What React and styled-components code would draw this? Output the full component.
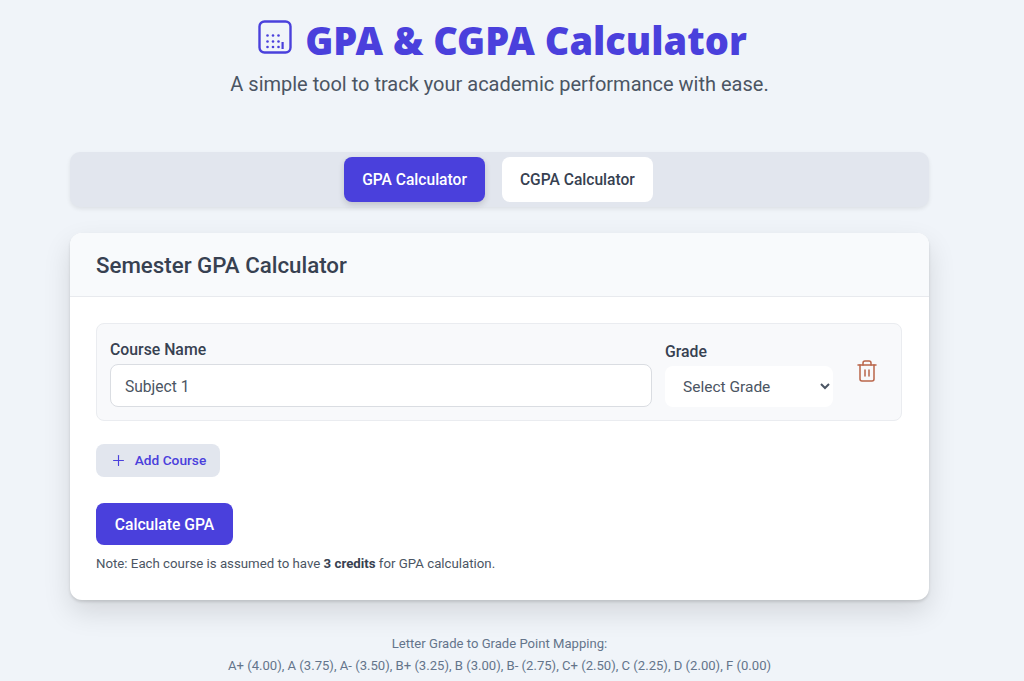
import styled, { createGlobalStyle } from "styled-components";
import { Plus, Trash2 } from "lucide-react";

const GlobalStyle = createGlobalStyle`
  html, body {
    margin: 0;
    padding: 0;
    height: 681px;
    overflow: hidden;
    background: #f0f4f9;
  }
  body {
    font-family: Roboto, "Noto Sans", sans-serif;
    color: #374151;
  }
  * {
    box-sizing: border-box;
  }
`;

const Page = styled.div`
  width: 999px;
  display: flex;
  flex-direction: column;
  align-items: center;
`;

const Header = styled.header`
  height: 152px;
  padding-top: 15px;
  display: flex;
  flex-direction: column;
  align-items: center;
`;

const TitleRow = styled.div`
  display: flex;
  align-items: center;
  gap: 13px;
  height: 50px;
  padding-left: 6px;

  svg {
    margin-bottom: 6px;
  }
`;

const Title = styled.h1`
  margin: 0;
  font-family: "Noto Sans", sans-serif;
  font-size: 38px;
  line-height: 50px;
  font-weight: 900;
  color: #4a40dc;
`;

const Subtitle = styled.p`
  margin: 4px 0 0;
  font-size: 20px;
  line-height: 30px;
  color: #4b5563;
`;

const Tabs = styled.nav`
  width: 859px;
  height: 55px;
  display: flex;
  justify-content: center;
  align-items: flex-start;
  gap: 17px;
  padding: 5px 2px 0 0;
  background: #e2e6ee;
  border-radius: 10px;
  box-shadow: 0 2px 4px rgba(0, 0, 0, 0.08);
`;

const Tab = styled.button`
  height: 45px;
  padding: 0 18px;
  border: none;
  border-radius: 8px;
  font-family: inherit;
  font-size: 15.6px;
  font-weight: 500;
  color: ${(p) => (p.$active ? "#ffffff" : "#374151")};
  background: ${(p) => (p.$active ? "#4a40dc" : "#ffffff")};
  box-shadow: ${(p) => (p.$active ? "0 3px 6px rgba(0, 0, 0, 0.15)" : "none")};
`;

const Card = styled.section`
  width: 859px;
  height: 367px;
  margin-top: 26px;
  background: #ffffff;
  border-radius: 12px;
  box-shadow: 0 12px 28px rgba(0, 0, 0, 0.12), 0 2px 3px rgba(0, 0, 0, 0.12);
`;

const CardHeader = styled.div`
  height: 64px;
  padding: 0 26px;
  display: flex;
  align-items: center;
  background: #f8fafc;
  border-bottom: 1px solid #e8eaee;
  border-radius: 12px 12px 0 0;
`;

const CardTitle = styled.h2`
  margin: 1px 0 0;
  font-size: 22.3px;
  line-height: 28px;
  font-weight: 500;
  color: #374151;
`;

const CardBody = styled.div`
  padding: 26px 26px 0;
`;

const CourseRow = styled.div`
  width: 806px;
  height: 98px;
  display: flex;
  align-items: flex-start;
  padding: 0 13px;
  background: #f8f9fb;
  border: 1px solid #eaecf0;
  border-radius: 8px;
`;

const Field = styled.div`
  display: flex;
  flex-direction: column;
  width: ${(p) => p.$width}px;
  margin-right: ${(p) => p.$gap}px;
  padding-top: ${(p) => p.$top}px;
`;

const Label = styled.label`
  font-size: 15.8px;
  line-height: 20px;
  font-weight: 500;
  color: #374151;
  margin-bottom: ${(p) => p.$gap}px;
`;

const TextInput = styled.input`
  height: 43px;
  width: 100%;
  padding: 2px 14px 0;
  border: 1px solid #dadde2;
  border-radius: 8px;
  background: #ffffff;
  font-family: inherit;
  font-size: 15.6px;
  color: #4b5563;
  outline: none;
`;

const GradeSelect = styled.select`
  height: 41px;
  width: 100%;
  padding: 1px 14px 0;
  border: none;
  border-radius: 8px;
  background: #ffffff;
  font-family: inherit;
  font-size: 15.5px;
  color: #4b5563;
`;

const DeleteButton = styled.button`
  margin: 34px 0 0 22px;
  width: 24px;
  height: 26px;
  padding: 0;
  display: flex;
  align-items: center;
  justify-content: center;
  border: none;
  background: none;
  color: #b9654a;
`;

const AddButton = styled.button`
  margin-top: 23px;
  height: 33px;
  width: 124px;
  display: flex;
  align-items: center;
  justify-content: center;
  gap: 8px;
  padding: 0 0 1px;
  border: none;
  border-radius: 8px;
  background: #e2e6ee;
  color: #4a40dc;
  font-family: inherit;
  font-size: 13.7px;
  font-weight: 500;
`;

const CalculateButton = styled.button`
  display: block;
  margin-top: 26px;
  height: 42px;
  width: 137px;
  border: none;
  border-radius: 8px;
  background: #4a40dc;
  color: #ffffff;
  font-family: inherit;
  font-size: 15.7px;
  font-weight: 500;
`;

const Note = styled.p`
  margin: 10px 0 0;
  font-size: 13.25px;
  line-height: 18px;
  color: #4b5563;

  strong {
    font-weight: 700;
    color: #374151;
  }
`;

const Footer = styled.footer`
  margin-top: 33px;
  text-align: center;
  font-size: 13.1px;
  line-height: 22px;
  color: #64748b;
`;

function CalculatorIcon() {
  return (
    <svg width="34" height="34" viewBox="0 0 34 34" fill="none">
      <rect x="1.5" y="1.5" width="31" height="31" rx="5" stroke="#4a40dc" strokeWidth="2.4" />
      <g fill="#4a40dc">
        <circle cx="9.5" cy="15.5" r="1.3" />
        <circle cx="15" cy="15.5" r="1.3" />
        <circle cx="20.5" cy="15.5" r="1.3" />
        <circle cx="9.5" cy="21.5" r="1.3" />
        <circle cx="15" cy="21.5" r="1.3" />
        <circle cx="20.5" cy="21.5" r="1.3" />
        <circle cx="9.5" cy="27" r="1.3" />
        <circle cx="15" cy="27" r="1.3" />
        <circle cx="20.5" cy="27" r="1.3" />
        <rect x="23.5" y="22" width="2.2" height="7" />
      </g>
    </svg>
  );
}

export default function App() {
  return (
    <>
      <GlobalStyle />
      <Page>
        <Header>
          <TitleRow>
            <CalculatorIcon />
            <Title>GPA &amp; CGPA Calculator</Title>
          </TitleRow>
          <Subtitle>A simple tool to track your academic performance with ease.</Subtitle>
        </Header>

        <Tabs>
          <Tab $active>GPA Calculator</Tab>
          <Tab>CGPA Calculator</Tab>
        </Tabs>

        <Card>
          <CardHeader>
            <CardTitle>Semester GPA Calculator</CardTitle>
          </CardHeader>
          <CardBody>
            <CourseRow>
              <Field $width={542} $gap={13} $top={16}>
                <Label $gap={4}>Course Name</Label>
                <TextInput defaultValue="Subject 1" />
              </Field>
              <Field $width={168} $gap={0} $top={18}>
                <Label $gap={4}>Grade</Label>
                <GradeSelect defaultValue="">
                  <option value="">Select Grade</option>
                  <option>A+</option>
                  <option>A</option>
                </GradeSelect>
              </Field>
              <DeleteButton aria-label="Remove course">
                <Trash2 size={24} strokeWidth={1.5} />
              </DeleteButton>
            </CourseRow>

            <AddButton>
              <Plus size={17} strokeWidth={1.6} />
              Add Course
            </AddButton>
            <CalculateButton>Calculate GPA</CalculateButton>
            <Note>
              Note: Each course is assumed to have <strong>3 credits</strong> for GPA calculation.
            </Note>
          </CardBody>
        </Card>

        <Footer>
          Letter Grade to Grade Point Mapping:
          <br />
          A+ (4.00), A (3.75), A- (3.50), B+ (3.25), B (3.00), B- (2.75), C+ (2.50), C (2.25), D (2.00), F (0.00)
        </Footer>
      </Page>
    </>
  );
}
